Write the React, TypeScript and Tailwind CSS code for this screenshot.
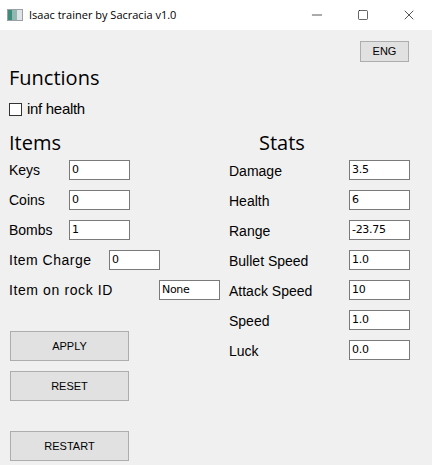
import { Minus, Square, X } from "lucide-react";

const items = [
  { label: "Keys", value: "0" },
  { label: "Coins", value: "0" },
  { label: "Bombs", value: "1" },
];

const stats = [
  { label: "Damage", value: "3.5" },
  { label: "Health", value: "6" },
  { label: "Range", value: "-23.75" },
  { label: "Bullet Speed", value: "1.0" },
  { label: "Attack Speed", value: "10" },
  { label: "Speed", value: "1.0" },
  { label: "Luck", value: "0.0" },
];

function Field({ value, className = "" }: { value: string; className?: string }) {
  return (
    <div
      className={`flex h-[20px] items-center border border-[#7a7a7a] bg-white pl-[2px] text-black ${className}`}
      style={{ fontFamily: "'DejaVu Sans', Tahoma, sans-serif" }}
    >
      <span className="text-[11px] tracking-[-0.3px]">{value}</span>
    </div>
  );
}

function WinButton({ label, className = "" }: { label: string; className?: string }) {
  return (
    <button
      type="button"
      className={`flex items-center justify-center border border-[#adadad] bg-[#e1e1e1] text-[11px] text-black ${className}`}
      style={{ fontFamily: "'Liberation Sans', Arial, sans-serif" }}
    >
      {label}
    </button>
  );
}

export default function App() {
  const label = { fontFamily: "'Liberation Sans', Tahoma, sans-serif" };
  const heading = { fontFamily: "'Open Sans', 'Noto Sans', sans-serif" };

  return (
    <div className="h-[465px] w-[432px] overflow-hidden bg-[#f0f0f0] text-black">
      {/* title bar */}
      <div className="flex h-[30px] items-center bg-white">
        <div className="ml-[7px] flex h-[12px] w-[16px] items-stretch border border-[#9aa0a6] bg-[#dfe3e6]">
          <div className="w-[4px] bg-[#3c8c7c]" />
          <div className="w-[5px] bg-[#8fb9b0]" />
        </div>
        <span
          className="ml-[6px] text-[11px] text-black"
          style={{ fontFamily: "'Open Sans', 'Noto Sans', sans-serif" }}
        >
          Isaac trainer by Sacracia v1.0
        </span>
        <div className="ml-auto flex h-full items-center">
          <div className="flex w-[46px] justify-center">
            <Minus className="h-[16px] w-[16px]" strokeWidth={1} />
          </div>
          <div className="flex w-[46px] justify-center">
            <Square className="h-[12px] w-[12px]" strokeWidth={1.2} />
          </div>
          <div className="flex w-[46px] justify-center">
            <X className="h-[16px] w-[16px]" strokeWidth={1} />
          </div>
        </div>
      </div>

      {/* lang */}
      <div className="flex justify-end pr-[23px] pt-[11px]">
        <WinButton label="ENG" className="h-[21px] w-[49px]" />
      </div>

      <div className="px-[9px]">
        <h2 className="mt-[2px] h-[28px] text-[20px] leading-[28px]" style={heading}>
          Functions
        </h2>
        <label className="mt-[7px] flex h-[20px] items-center gap-[5px]">
          <span className="h-[13px] w-[13px] border border-[#333] bg-white" />
          <span className="text-[15px] tracking-[-0.3px]" style={label}>
            inf health
          </span>
        </label>

        <div className="mt-[11px] grid grid-cols-[220px_1fr]">
          {/* items */}
          <div>
            <h2 className="h-[25px] text-[20px] leading-[25px]" style={heading}>
              Items
            </h2>
            {items.map((it) => (
              <div key={it.label} className="flex h-[30px] items-center">
                <span className="w-[60px] text-[14px]" style={label}>
                  {it.label}
                </span>
                <Field value={it.value} className="w-[61px]" />
              </div>
            ))}
            <div className="flex h-[30px] items-center">
              <span className="w-[100px] text-[14px] tracking-[0.5px]" style={label}>
                Item Charge
              </span>
              <Field value="0" className="w-[51px]" />
            </div>
            <div className="flex h-[30px] items-center">
              <span className="w-[150px] text-[14px] tracking-[0.6px]" style={label}>
                Item on rock ID
              </span>
              <Field value="None" className="w-[61px]" />
            </div>

            <div className="ml-[1px] mt-[26px] flex flex-col">
              <WinButton label="APPLY" className="h-[30px] w-[119px]" />
              <WinButton label="RESET" className="mt-[10px] h-[30px] w-[119px]" />
              <WinButton label="RESTART" className="mt-[30px] h-[30px] w-[119px]" />
            </div>
          </div>

          {/* stats */}
          <div>
            <h2 className="h-[25px] pl-[30px] text-[20px] leading-[25px]" style={heading}>
              Stats
            </h2>
            {stats.map((s) => (
              <div key={s.label} className="flex h-[30px] items-center">
                <span className="w-[120px] pt-[3px] text-[14px]" style={label}>
                  {s.label}
                </span>
                <Field value={s.value} className="w-[61px]" />
              </div>
            ))}
          </div>
        </div>
      </div>
    </div>
  );
}
